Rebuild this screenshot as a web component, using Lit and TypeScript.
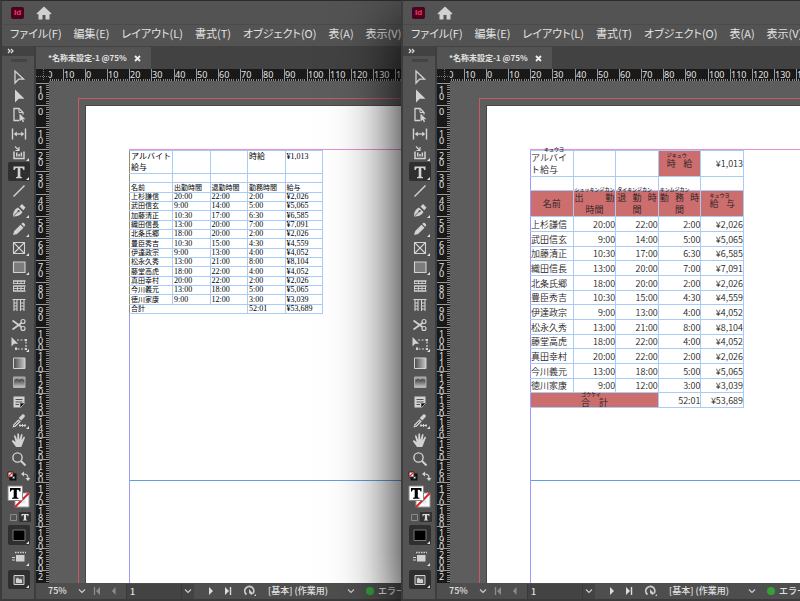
import { LitElement, html, css, svg, nothing } from "lit";
import { customElement, property } from "lit/decorators.js";
import { classMap } from "lit/directives/class-map.js";

type Icon = ReturnType<typeof svg>;

const L = "#d2d2d2";

const icons: Record<string, Icon> = {
  select: svg`<path d="M6 3v12l3.6-3.8h5z" fill="none" stroke=${L} stroke-width="1.3"/>`,
  direct: svg`<path d="M6 2.500v13l3.800-3.800h5.700z" fill=${L}/>`,
  page: svg`<path d="M10 14.500H5v-12h5l4 4v2" fill="none" stroke=${L} stroke-width="1.3"/><path d="M10 2.500v4h4" fill="none" stroke=${L}/><path d="M10.500 7.500v8l2-1.800 1.400 2.500 1.200-.7-1.300-2.300h2.500z" fill=${L}/>`,
  gap: svg`<path d="M3.500 3.500v11M16.500 3.500v11" stroke=${L} stroke-width="1.400"/><path d="M6 9h8" stroke=${L} stroke-width="1.300"/><path d="M4.800 9l3-2.500v5zM15.200 9l-3-2.500v5z" fill=${L}/>`,
  collect: svg`<path d="M5 7.500v7h10v-7" fill="none" stroke=${L} stroke-width="1.500"/><path d="M7 8.500h1.500v4H7zM9.300 10h1.500v2.500H9.300zM11.600 8.500h1.500v4h-1.500z" fill=${L}/><path d="M6 2.500l3.500 3.500M10 3v3.500H6.500" fill="none" stroke=${L} stroke-width="1.200"/>`,
  type: svg`<path d="M4.500 3.500h11v3.600h-1.300c-.2-1.600-.7-2-2.900-2v8c0 .8.400 1 1.700 1.100v1H7v-1c1.300-.1 1.700-.3 1.700-1.100v-8c-2.200 0-2.700.4-2.900 2H4.500z" fill=${L}/>`,
  line: svg`<path d="M4.500 14.500l11-11" stroke=${L} stroke-width="1.500"/>`,
  pen: svg`<path d="M4 15.500c0-4 1.500-7.500 5-9l4.500 4.500c-1.500 3-5 4.500-9 4.500zM10.500 5.500l2.500-2.500 3.500 3.500-2.200 2.700z" fill=${L}/><path d="M4.500 15l5-4.700" stroke="#535353" stroke-width=".9"/><circle cx="9.600" cy="10.200" r="1.100" fill="#535353"/>`,
  pencil: svg`<path d="M4 15l1.200-4 6.300-6.300 3 3-6.400 6.200zM12.300 3.900l1.200-1.100c.8-.6 3.300 1.700 2.600 2.700l-1 1.200z" fill=${L}/>`,
  frame: svg`<path d="M4.500 3.500h11v11h-11zM4.500 3.500l11 11M15.500 3.500l-11 11" fill="none" stroke=${L} stroke-width="1.100"/>`,
  rect: svg`<path d="M4.500 4h11.500v10.500H4.500z" fill="#7c7c7c" stroke=${L} stroke-width="1.100"/>`,
  hgrid: svg`<path d="M4 4h12.500M4 9h12.500M4 14h12.500" stroke=${L} stroke-width="1.300"/><path d="M4.500 4v3M8.500 4v3M12 4v3M15.500 4v3M4.500 9v5M8.500 9.500v4M12 9.500v4M15.500 9.500v4M4 6.500h12M4 11.500h12" stroke=${L} stroke-width=".9" fill="none"/>`,
  vgrid: svg`<path d="M3.500 3.500h13M5 4v11M8 4v11M11.500 4v11M15 4v11M5 7h3M5 10h3M5 13h3M11.500 7H15M11.500 10H15M11.500 13H15" stroke=${L} fill="none" stroke-width="1.100"/>`,
  scissors: svg`<path d="M3.500 4.500l9 6.500M3.500 13.500l9-6.500" stroke=${L} stroke-width="1.700"/><circle cx="14" cy="5.500" r="2" fill="none" stroke=${L} stroke-width="1.200"/><circle cx="14" cy="12.500" r="2" fill="none" stroke=${L} stroke-width="1.200"/>`,
  transform: svg`<path d="M2.500 2v9.500l2.600-2.700h4z" fill=${L}/><path d="M8 5h9v9H7v-3" fill="none" stroke=${L} stroke-width="1.200" stroke-dasharray="2 1.500"/><path d="M16 4h2v2h-2zM16 13h2v2h-2zM6 13h2v2H6z" fill=${L}/>`,
  gradient: svg`<defs><linearGradient id="g1"><stop offset="0" stop-color="#4a4a4a"/><stop offset="1" stop-color="#c8c8c8"/></linearGradient></defs><path d="M4.500 4H16v10.500H4.500z" fill="url(#g1)" stroke=${L}/>`,
  feather: svg`<defs><linearGradient id="g2" x2="0" y2="1"><stop offset="0" stop-color="#a8a8a8"/><stop offset=".45" stop-color="#6a6a6a"/><stop offset="1" stop-color="#c8c8c8"/></linearGradient></defs><path d="M4.500 4H16v10.500H4.500z" fill="url(#g2)" stroke="#b0b0b0"/><path d="M6 8l2-1.500L10.500 8l2-1.500L15 8" fill="none" stroke="#4c4c4c" stroke-width="1.400"/>`,
  note: svg`<path d="M4.500 3.500h11v7l-3.500 4H4.500z" fill=${L}/><path d="M6.500 6.500h7M6.500 9h7M6.500 11.500h3.500M11.500 14v-3.500h3.500" stroke="#535353"/>`,
  dropper: svg`<path d="M3.500 15.500l.8-3 5.200-5.300 2.300 2.300-5.200 5.200zM9.700 5.900l1.300-1.100 2.300-2.300c1.300-.9 3.300 1 2.400 2.300l-2.300 2.400-1.200 1.300z" fill=${L}/><path d="M5.300 13.600l4.400-4.300" stroke="#535353"/><path d="M10 13.500h7M11 12v3M13.500 12v3M16 12v3" stroke=${L}/>`,
  hand: svg`<path d="M7 16c-1-1.700-3-4.200-4-5.600-.4-.9.800-1.400 1.500-.8L6.600 11 5 5.200c-.2-1.100 1.200-1.500 1.600-.5L8.200 9l.2-6c.1-1 1.500-1 1.600 0l.4 5.700L12 3.600c.4-1 1.700-.6 1.500.4l-1 5.400 2-3.300c.6-.8 1.700-.2 1.400.7l-2.200 5.700c-.4 1.200-.9 2.300-1.500 3.500z" fill=${L}/>`,
  zoom: svg`<circle cx="8.500" cy="7.500" r="4.600" fill="none" stroke=${L} stroke-width="1.400"/><path d="M12 11l4.500 4.500" stroke=${L} stroke-width="2"/>`,
};

const tools: { id: string; name: string; more?: boolean; on?: boolean; gap?: boolean }[] = [
  { id: "select", name: "選択" },
  { id: "direct", name: "ダイレクト選択" },
  { id: "page", name: "ページ" },
  { id: "gap", name: "間隔" },
  { id: "collect", name: "コンテンツ収集", more: true },
  { id: "type", name: "横組み文字", more: true, on: true },
  { id: "line", name: "線" },
  { id: "pen", name: "ペン", more: true },
  { id: "pencil", name: "鉛筆", more: true },
  { id: "frame", name: "長方形フレーム", more: true },
  { id: "rect", name: "長方形", more: true },
  { id: "hgrid", name: "横組みグリッド" },
  { id: "vgrid", name: "縦組みグリッド" },
  { id: "scissors", name: "はさみ", gap: true },
  { id: "transform", name: "自由変形", more: true },
  { id: "gradient", name: "グラデーションスウォッチ" },
  { id: "feather", name: "グラデーションぼかし" },
  { id: "note", name: "注釈", gap: true },
  { id: "dropper", name: "スポイト", more: true },
  { id: "hand", name: "手のひら" },
  { id: "zoom", name: "ズーム" },
];

const menus = ["ファイル(F)", "編集(E)", "レイアウト(L)", "書式(T)", "オブジェクト(O)", "表(A)", "表示(V)"];

const shifts = [
  ["上杉謙信", "20:00", "22:00", "2:00", "¥2,026"],
  ["武田信玄", "9:00", "14:00", "5:00", "¥5,065"],
  ["加藤清正", "10:30", "17:00", "6:30", "¥6,585"],
  ["織田信長", "13:00", "20:00", "7:00", "¥7,091"],
  ["北条氏郷", "18:00", "20:00", "2:00", "¥2,026"],
  ["豊臣秀吉", "10:30", "15:00", "4:30", "¥4,559"],
  ["伊達政宗", "9:00", "13:00", "4:00", "¥4,052"],
  ["松永久秀", "13:00", "21:00", "8:00", "¥8,104"],
  ["藤堂高虎", "18:00", "22:00", "4:00", "¥4,052"],
  ["真田幸村", "20:00", "22:00", "2:00", "¥2,026"],
  ["今川義元", "13:00", "18:00", "5:00", "¥5,065"],
  ["徳川家康", "9:00", "12:00", "3:00", "¥3,039"],
];

const more = html`<svg class="more" width="3" height="3" viewBox="0 0 3 3"><path d="M3 0v3H0z" fill="#e0e0e0" /></svg>`;

@customElement("tool-box")
class ToolBox extends LitElement {
  static styles = css`
    :host { display: flex; flex-direction: column; box-sizing: border-box; width: 34px; border-right: 2px solid #3e3e3e; background: #535353; }
    button { position: relative; display: grid; place-items: center; padding: 0; border: 0; background: none; color: #d2d2d2; font: 700 8px "Liberation Sans", sans-serif; }
    .head { height: 10px; flex: none; background: #424242; justify-items: start; padding-left: 5px; }
    .grip { height: 3px; flex: none; margin: 3px 7px 5px 9px; background: #444; }
    .tool { flex: none; width: 22px; height: 19px; margin-left: 6px; border-radius: 2px; }
    .gap { margin-top: 1px; }
    .on { background: #2f2f2f; }
    .more { position: absolute; right: 1px; bottom: 1px; }
    .mini { display: flex; justify-content: space-between; align-items: center; flex: none; height: 16px; margin: 0 3px 0 5px; }
    .swatch { flex: none; width: 26px; height: 25px; margin-left: 4px; }
    .tall { height: 20px; margin-bottom: 2px; }
    .bottom { height: 19px; margin-top: 1px; }
  `;
  render() {
    return html`
      <button class="head" aria-label="ツールパネルを展開"><svg width="8" height="6" viewBox="0 0 8 6"><path d="M1 1l2 2-2 2M4 1l2 2-2 2" fill="none" stroke="#ddd" stroke-width="1.2" /></svg></button>
      <div class="grip"></div>
      ${tools.map(
        (t) => html`<button class=${classMap({ tool: true, on: !!t.on, gap: !!t.gap })} aria-label=${t.name}>
          <svg width="20" height="18" viewBox="0 0 20 18">${icons[t.id]}</svg>${t.more ? more : nothing}
        </button>`
      )}
      <div class="mini">
        <button aria-label="初期設定の塗りと線">
          <svg width="10" height="10" viewBox="0 0 10 10"><path d="M3.500 3.500h5v5h-5z" fill="#111" stroke="#111" stroke-width="2" /><path d="M5.500 5.500h2v2h-2z" fill="#ddd" /><path d="M1 1h5v5H1z" fill="#fff" stroke="#222" /><path d="M1 6l5-5" stroke="#e22" stroke-width="1.300" /></svg>
        </button>
        <button aria-label="塗りと線を入れ替え">
          <svg width="10" height="10" viewBox="0 0 10 10"><path d="M2.500 3c3 0 4.500 1 4.500 4" fill="none" stroke="#d2d2d2" stroke-width="1.200" /><path d="M0 3l3-2.500v5zM7 10L4.500 7h5z" fill="#d2d2d2" /></svg>
        </button>
      </div>
      <button class="swatch" aria-label="塗りと線">
        <svg width="24" height="23" viewBox="0 0 24 23">
          <path d="M8 8h14v14H8z" fill="#fff" stroke="#999" /><path d="M11.500 11.500h7v7h-7z" fill="#e8e8e8" /><path d="M8 22L22 8" stroke="#e0202a" stroke-width="2" />
          <path d="M1 1h14.500v14.500H1z" fill="#fff" stroke="#888" /><path d="M3 3h10.500v3.500h-1c-.2-1.500-.8-1.800-2.700-1.800v6.800c0 1 .4 1.300 1.700 1.300v1H5v-1c1.300 0 1.700-.3 1.700-1.300V4.700C4.800 4.700 4.200 5 4 6.500H3z" fill="#000" />
        </svg>
      </button>
      <div class="mini">
        <button aria-label="オブジェクトに適用"><svg width="12" height="12" viewBox="0 0 12 12"><path d="M3.500 3.500h6v6h-6z" fill="none" stroke="#8a8a8a" /></svg></button>
        <button aria-label="テキストに適用"><svg width="12" height="12" viewBox="0 0 12 12"><path d="M0 1h12v10H0z" fill="#333" /><path d="M2.500 3h7v2.200h-.8c-.1-.8-.4-1.100-1.600-1.100v4c0 .6.300.8 1 .8v.7H3.900v-.7c.7 0 1-.2 1-.8v-4c-1.200 0-1.500.3-1.600 1.100h-.8z" fill="#ddd" /></svg></button>
      </div>
      <button class="tool on tall" aria-label="カラーを適用"><svg width="20" height="18" viewBox="0 0 20 18"><path d="M4 4h12v10.500H4z" fill="#000" stroke="#777" /></svg>${more}</button>
      <button class="tool tall" aria-label="表示オプション"><svg width="20" height="18" viewBox="0 0 20 18"><path d="M7 7h8.500v6.500H7z" fill="#d2d2d2" /><path d="M6 4.500h11" stroke="#d2d2d2" stroke-width="1.500" stroke-dasharray="1.500 1" /><path d="M3 9.500h3M3 12h3" stroke="#d2d2d2" /></svg>${more}</button>
      <button class="tool on bottom" aria-label="スクリーンモード"><svg width="20" height="18" viewBox="0 0 20 18"><path d="M5 4.500h10v9H5z" fill="#555" stroke="#d2d2d2" /><path d="M7 8l1.500-1.500 2 2 1-1L13 9v3H7z" fill="#d2d2d2" /></svg>${more}</button>
    `;
  }
}

// Distance in pixels between two numbered marks (10 mm at 75%).
const STEP = 22.15;

@customElement("page-ruler")
class PageRuler extends LitElement {
  @property({ type: Boolean }) vertical = false;
  @property({ type: Number }) origin = 0;
  private length = 0;
  private watcher = new ResizeObserver(() => this.measure());
  static styles = css`
    :host { display: block; overflow: hidden; min-width: 0; min-height: 0; background: #191919; contain: size; }
    svg { display: block; }
    text { fill: #e4e4e4; font: 9px "Noto Sans", sans-serif; }
    .major { stroke: #9a9a9a; }
    .minor { stroke: #8c8c8c; }
  `;
  connectedCallback() {
    super.connectedCallback();
    this.watcher.observe(this);
  }
  disconnectedCallback() {
    super.disconnectedCallback();
    this.watcher.disconnect();
  }
  private measure() {
    const next = this.vertical ? this.clientHeight : this.clientWidth;
    if (next !== this.length) {
      this.length = next;
      this.requestUpdate();
    }
  }
  render() {
    const at = (n: number) => Math.round(this.origin + n * STEP);
    const marks: number[] = [];
    for (let m = this.vertical ? -1 : -2; at(m) < this.length - 2; m++) marks.push(m);
    const minor = marks.flatMap((m) => Array.from({ length: 9 }, (_, k) => at(m + (k + 1) / 10)));
    if (this.vertical) {
      return html`<svg width="13" height=${this.length} shape-rendering="crispEdges" aria-hidden="true">
        ${minor.map((y) => svg`<path class="minor" d=${`M10 ${y}.500h3`}/>`)}
        ${marks.map((m) => svg`<path class="major" d=${`M0 ${at(m)}.500h13`}/>
          ${String(Math.abs(m * 10)).split("").filter((_, i) => at(m) + 9 + i * 7 < this.length).map((d, i) => svg`<text x="2" y=${at(m) + 10 + i * 7}>${d}</text>`)}`)}
      </svg>`;
    }
    return html`<svg width=${this.length} height="12" shape-rendering="crispEdges" aria-hidden="true">
      ${minor.map((x) => svg`<path class="minor" d=${`M${x}.500 10v2`}/>`)}
      ${marks.map((m) => svg`<path class="major" d=${`M${at(m)}.500 0v12`}/><text x=${at(m) + 1} y="9">${Math.abs(m * 10)}</text>`)}
    </svg>`;
  }
}

@customElement("plain-sheet")
class PlainSheet extends LitElement {
  static styles = css`
    :host { display: block; }
    table { width: 194px; table-layout: fixed; border-collapse: collapse; color: #000; font: 8px/8px "Liberation Serif", "Noto Sans CJK JP", serif; }
    tr { height: 9px; }
    tr:nth-child(3n) { height: 10px; }
    tr.title { height: 23px; }
    td, th { padding: 0 0 0 1px; border: 1px solid #a9ccf6; text-align: left; vertical-align: middle; font-weight: 400; white-space: nowrap; }
    tr > :first-child { border-left-color: #8f9270; }
    th { font-size: 7px; }
    .first { width: 43px; }
    .title td { line-height: 11px; vertical-align: top; }
    .title .wrap { white-space: normal; }
  `;
  render() {
    return html`<table>
      <colgroup><col class="first" /><col /><col /><col /><col /></colgroup>
      <tbody>
        <tr class="title"><td class="wrap">アルバイト給与</td><td></td><td></td><td>時給</td><td>¥1,013</td></tr>
        <tr><td></td><td></td><td></td><td></td><td></td></tr>
        <tr>${["名前", "出勤時間", "退勤時間", "勤務時間", "給与"].map((h) => html`<th scope="col">${h}</th>`)}</tr>
        ${shifts.map(([name, ...rest]) => html`<tr><th scope="row">${name}</th>${rest.map((v) => html`<td>${v}</td>`)}</tr>`)}
        <tr><th scope="row" colspan="3">合計</th><td>52:01</td><td>¥53,689</td></tr>
      </tbody>
    </table>`;
  }
}

@customElement("styled-sheet")
class StyledSheet extends LitElement {
  static styles = css`
    :host { display: block; }
    table { width: 214px; table-layout: fixed; border-collapse: collapse; color: #222; font: 350 9px/9px "Noto Sans CJK JP", sans-serif; }
    tr { height: 15px; }
    tr:nth-child(3n), tr.blank { height: 14px; }
    tr.two { height: 26px; }
    td, th { padding: 0; border: 1px solid #a9ccf6; text-align: right; vertical-align: middle; font-weight: 350; white-space: nowrap; }
    tr > :first-child { border-left-color: #9a9af8; text-align: left; }
    .two > .name { text-align: center; }
    th.red, td.red, tr > .red:first-child { background: #cd6e6e; text-align: center; }
    .read { display: block; height: 5px; margin: -5px 0 0; font-size: 5px; line-height: 5px; font-weight: 500; text-align: left; }
    .chars { display: flex; justify-content: space-between; line-height: 13px; }
    .rest { display: block; height: 12px; line-height: 12px; }
    .in { display: block; padding: 0 8px; }
    .edge { display: block; padding: 0 1px; }
    .lead { display: block; }
    .lead .read { padding-left: 13px; }
    .lead .chars { justify-content: flex-start; }
    .sum { display: block; width: 27px; height: 13px; margin: 0 auto; }
  `;
  private reading(kind: string, read: string, chars: string, rest = "") {
    return html`<span class=${kind}><span class="read">${read}</span><span class="chars">${[...chars].map((c) => html`<span>${c}</span>`)}</span>${rest ? html`<span class="rest">${rest}</span>` : nothing}</span>`;
  }
  render() {
    return html`<table>
      <tbody>
        <tr class="two"><td>${this.reading("lead", "キュウヨ", "アルバイ", "ト給与")}</td><td></td><td></td><td class="red">${this.reading("in", "ジキュウ", "時給")}</td><td>¥1,013</td></tr>
        <tr class="blank"><td></td><td></td><td></td><td></td><td></td></tr>
        <tr class="two">
          <th scope="col" class="red name">名前</th>
          <th scope="col" class="red">${this.reading("edge", "シュッキンジカン", "出勤", "時間")}</th>
          <th scope="col" class="red">${this.reading("edge", "タイキンジカン", "退勤時", "間")}</th>
          <th scope="col" class="red">${this.reading("edge", "キンムジカン", "勤務時", "間")}</th>
          <th scope="col" class="red">${this.reading("in", "キュウヨ", "給与")}</th>
        </tr>
        ${shifts.map(([name, ...rest]) => html`<tr><th scope="row">${name}</th>${rest.map((v) => html`<td>${v}</td>`)}</tr>`)}
        <tr><th scope="row" colspan="3" class="red">${this.reading("sum", "ゴウケイ", "合計")}</th><td>52:01</td><td>¥53,689</td></tr>
      </tbody>
    </table>`;
  }
}

const chevron = html`<svg class="chev" width="12" height="10" viewBox="0 0 12 10"><path d="M3 3.500l3 3 3-3" fill="none" stroke="#ccc" stroke-width="1.200" /></svg>`;

@customElement("layout-window")
class LayoutWindow extends LitElement {
  @property({ type: Boolean }) styled = false;
  static styles = css`
    :host { display: grid; grid-template-rows: 24px 21px minmax(0, 1fr) 2px; height: 100%; min-width: 0; box-sizing: border-box; overflow: hidden; border-left: 2px solid #3c3c3c; border-top: 1px solid #2c2c2c; background: #535353; color: #e2e2e2; font: 11px/16px "Noto Sans CJK JP", sans-serif; }
    button, input, select { font: inherit; color: inherit; background: none; border: 0; border-radius: 0; margin: 0; padding: 0; appearance: none; min-width: 0; }
    svg { display: block; flex: none; }
    .title { display: flex; align-items: center; gap: 12px; padding: 0 9px; border-bottom: 1px solid #4b4b4b; }
    .logo { display: grid; place-items: center; width: 13px; height: 12px; border-radius: 2px; background: #49021f; color: #ff3366; font: 700 8px/12px "Liberation Sans", sans-serif; }
    nav { display: flex; gap: 12px; padding: 0 0 5px 8px; align-items: center; overflow: hidden; font-feature-settings: "palt"; }
    nav button { flex: none; white-space: nowrap; }
    .body { display: grid; grid-template-columns: 34px minmax(0, 1fr); grid-template-rows: minmax(0, 1fr); min-height: 0; }
    .work { display: grid; grid-template-columns: 13px minmax(0, 1fr); grid-template-rows: 23px 12px minmax(0, 1fr) 16px; min-height: 0; }
    .tabs { grid-column: 1 / 3; display: flex; background: #424242; }
    .tab { display: flex; align-items: center; gap: 7px; width: 103px; margin-top: 1px; padding-left: 12px; background: #535353; font-size: 8px; font-weight: 700; white-space: nowrap; }
    .corner { background: #191919; }
    .canvas { overflow: hidden; background: #5d5d5d; }
    .bleed { box-sizing: border-box; height: 100%; margin: 17px 0 0 29px; padding: 7px 0 0 7px; border: solid #c9586a; border-width: 1px 0 0 1px; }
    .page { box-sizing: border-box; height: 100%; padding: 43px 0 0 43px; background: #fff; box-shadow: 0 0 0 1px #484848; }
    .margin { height: 100%; border: solid #e88fd0; border-width: 1px 0 0 1px; border-left-color: #9a9af8; }
    .frame { height: 330px; border-bottom: 1px solid #5f9fe4; }
    .frame > * { margin-left: -1px; }
    .status { grid-column: 1 / 3; display: flex; align-items: center; padding-left: 10px; overflow: hidden; font-size: 9px; font-weight: 500; line-height: 14px; background: #4e4e4e; white-space: nowrap; }
    .status > * { flex: none; }
    .combo { display: flex; align-items: center; }
    .zoom { width: 30px; padding-left: 2px; }
    .nav { display: grid; place-items: center; width: 17px; height: 14px; }
    .pageno { margin: 0 8px 0 4px; height: 15px; background: #434343; }
    .pageno input { width: 56px; height: 15px; padding-left: 3px; border: solid #393939; border-width: 0 1px; box-sizing: border-box; }
    .pre { margin: 0 8px 0 5px; }
    .profile { width: 79px; padding-left: 2px; }
    .dot { width: 8px; height: 8px; margin: 0 4px 0 9px; border-radius: 50%; background: #35a03a; }
    .foot { background: #3a3a3a; }
  `;
  render() {
    return html`
      <header class="title">
        <span class="logo">Id</span>
        <button aria-label="ホーム"><svg width="16" height="14" viewBox="0 0 16 14"><path d="M8 .500L15.500 7.500l-1 1L13.500 8v5.500h-4V9h-3v4.500h-4V8l-1 .5-1-1z" fill="#d0d0d0" /></svg></button>
      </header>
      <nav>${menus.map((m) => html`<button>${m}</button>`)}</nav>
      <div class="body">
        <tool-box></tool-box>
        <div class="work">
          <div class="tabs">
            <div class="tab"><span>*名称未設定-1 @75%</span><button aria-label="閉じる"><svg width="7" height="7" viewBox="0 0 7 7"><path d="M1 1l5 5M6 1L1 6" stroke="#eee" stroke-width="1.800" /></svg></button></div>
          </div>
          <div class="corner"><svg width="13" height="12" viewBox="0 0 13 12"><path d="M0 7.500h13M7.500 0v12" stroke="#777" stroke-dasharray="1 1" /></svg></div>
          <page-ruler .origin=${36}></page-ruler>
          <page-ruler vertical .origin=${24}></page-ruler>
          <main class="canvas">
            <div class="bleed"><div class="page"><div class="margin"><div class="frame">
              ${this.styled ? html`<styled-sheet></styled-sheet>` : html`<plain-sheet></plain-sheet>`}
            </div></div></div></div>
          </main>
          <footer class="status">
            <label class="combo"><select class="zoom" aria-label="表示倍率"><option>75%</option></select>${chevron}</label>
            <button class="nav" aria-label="先頭ページ"><svg width="10" height="8" viewBox="0 0 10 8"><path d="M8 0v8L4 4z" fill="#8c8c8c" /><path d="M2.500 0v8" stroke="#8c8c8c" stroke-width="1.300" /></svg></button>
            <button class="nav" aria-label="前ページ"><svg width="8" height="8" viewBox="0 0 8 8"><path d="M5.500 0v8L2 4z" fill="#8c8c8c" /></svg></button>
            <label class="combo pageno"><input aria-label="ページ" value="1" />${chevron}</label>
            <button class="nav" aria-label="次ページ"><svg width="8" height="8" viewBox="0 0 8 8"><path d="M2 0v8l4-4z" fill="#ddd" /></svg></button>
            <button class="nav" aria-label="最終ページ"><svg width="10" height="8" viewBox="0 0 10 8"><path d="M2 0v8l4-4z" fill="#ddd" /><path d="M7.500 0v8" stroke="#ddd" stroke-width="1.400" /></svg></button>
            <button class="nav pre" aria-label="プリフライト"><svg width="14" height="12" viewBox="0 0 14 12"><path d="M3.500 9.500A4.500 4.500 0 1 1 10 8.500" fill="none" stroke="#ccc" stroke-width="1.800" /><path d="M6 4l4 4.500-1.500 1.500L6 8z" fill="#ccc" /><path d="M13 9v2h-2z" fill="#ccc" /></svg></button>
            <label class="combo"><select class="profile" aria-label="プロファイル"><option>[基本] (作業用)</option></select>${chevron}</label>
            <span class="dot"></span><span>エラー</span>
          </footer>
        </div>
      </div>
      <div class="foot"></div>
    `;
  }
}

@customElement("app-root")
class AppRoot extends LitElement {
  static styles = css`
    :host { display: flex; height: 100vh; overflow: hidden; background: #1b2a4a; }
    .back { flex: 1; }
    .front { flex: 0 0 calc(50% - 1px); box-shadow: 0 22px 60px #000; z-index: 1; }
  `;
  render() {
    return html`<layout-window class="back"></layout-window><layout-window class="front" styled></layout-window>`;
  }
}
